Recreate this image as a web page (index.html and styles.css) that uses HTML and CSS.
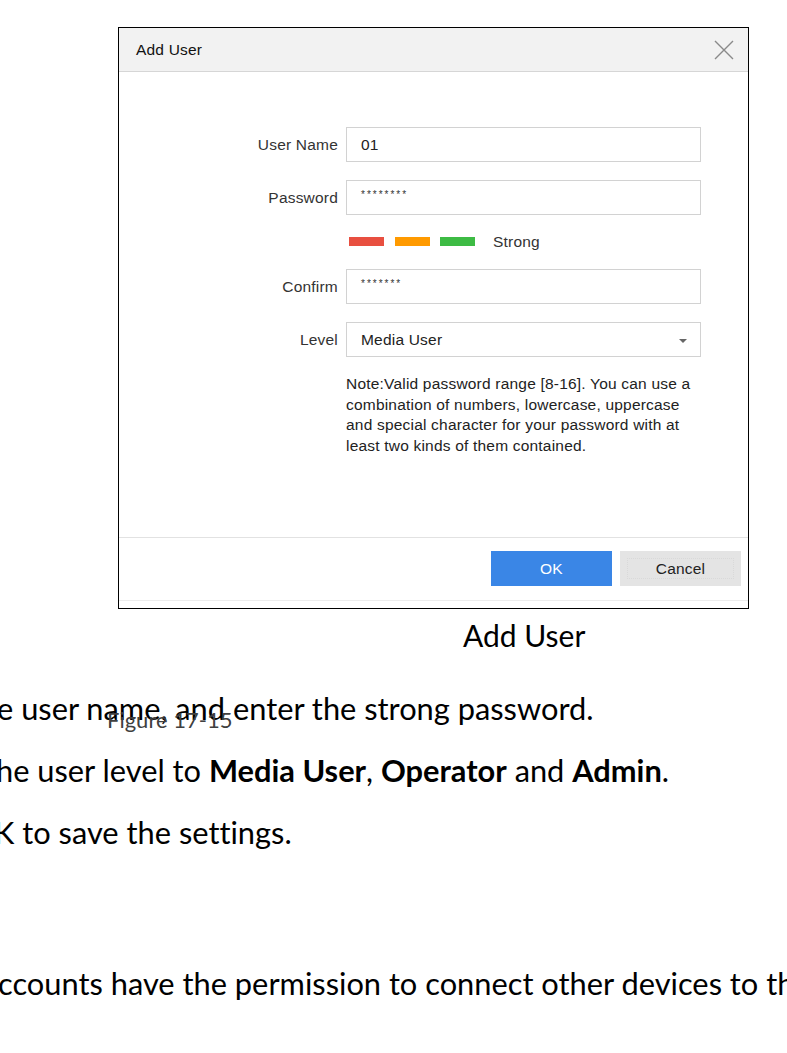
FILE: index.html
```html
<!DOCTYPE html>
<html>
<head>
<meta charset="utf-8">
<link rel="stylesheet" href="styles.css">
</head>
<body>
<div class="page">
  <div class="dialog">
    <div class="dlg-head">
      <span class="dlg-title">Add User</span>
      <svg class="dlg-close" width="20" height="20" viewBox="0 0 20 20"><path d="M1 1 L19 19 M19 1 L1 19" stroke="#8a8a8a" stroke-width="1.4" fill="none"/></svg>
    </div>
    <div class="dlg-body">
      <div class="row r-first">
        <div class="lbl">User Name</div>
        <div class="field"><span class="val">01</span></div>
      </div>
      <div class="row r-gap">
        <div class="lbl">Password</div>
        <div class="field"><span class="stars">********</span></div>
      </div>
      <div class="row r-strength">
        <div class="lbl"></div>
        <div class="strength">
          <span class="bar red"></span>
          <span class="bar orange"></span>
          <span class="bar green"></span>
          <span class="strong-txt">Strong</span>
        </div>
      </div>
      <div class="row r-confirm">
        <div class="lbl">Confirm</div>
        <div class="field"><span class="stars">*******</span></div>
      </div>
      <div class="row r-gap">
        <div class="lbl">Level</div>
        <div class="field select"><span class="val">Media User</span><span class="caret"></span></div>
      </div>
      <div class="row r-note">
        <div class="lbl"></div>
        <div class="note">Note:Valid password range [8-16]. You can use a combination of numbers, lowercase, uppercase and special character for your password with at least two kinds of them contained.</div>
      </div>
    </div>
    <div class="dlg-foot">
      <button class="btn ok">OK</button>
      <button class="btn cancel">Cancel</button>
    </div>
  </div>
  <p class="caption">Add User</p>
  <p class="doc l1">e user name, and enter the strong password.<span class="figno">Figure 17-15</span></p>
  <p class="doc l2">he user level to <b>Media User</b>, <b>Operator</b> and <b>Admin</b>.</p>
  <p class="doc l3">K to save the settings.</p>
  <p class="doc l4">ccounts have the permission to connect other devices to the</p>
</div>
</body>
</html>
```
FILE: styles.css
```css
html, body {
  margin: 0;
  padding: 0;
  background: #fff;
}
body {
  width: 787px;
  height: 1053px;
  overflow: hidden;
}
.page {
  padding-top: 27px;
}
.dialog {
  margin-left: 118px;
  width: 629px;
  height: 580px;
  border: 1px solid #000;
  background: #fff;
  font-family: "Liberation Sans", Arial, sans-serif;
  letter-spacing: 0.2px;
  color: #333;
  display: flex;
  flex-direction: column;
}
.dlg-head {
  height: 43px;
  background: #f2f2f2;
  border-bottom: 1px solid #d6d6d6;
  display: flex;
  align-items: center;
  justify-content: space-between;
  padding: 0 14px 0 17px;
}
.dlg-title {
  font-size: 15.5px;
  color: #111;
}
.dlg-close {
  display: block;
}
.dlg-body {
  flex: 1;
}
.row {
  display: flex;
  align-items: center;
}
.lbl {
  width: 219px;
  flex: none;
  text-align: right;
  font-size: 15.5px;
  color: #333;
  margin-right: 8px;
}
.field {
  width: 339px;
  height: 33px;
  border: 1px solid #d2d2d2;
  display: flex;
  align-items: center;
  padding-left: 14px;
  box-sizing: content-box;
  position: relative;
}
.field .val {
  font-size: 15.5px;
  color: #222;
}
.stars {
  font-size: 10px;
  color: #333;
  letter-spacing: 2px;
  margin-top: -7px;
}
.r-first { margin-top: 55px; }
.r-gap { margin-top: 18px; }
.r-strength { margin-top: 22px; height: 9px; }
.r-confirm { margin-top: 23px; }
.r-note { margin-top: 17px; align-items: flex-start; }
.strength {
  display: flex;
  align-items: center;
  padding-left: 3px;
}
.bar {
  display: block;
  width: 35px;
  height: 9px;
  margin-right: 10px;
}
.bar.red { background: #e84f40; margin-right: 11px; }
.bar.orange { background: #ff9a00; }
.bar.green { background: #3dbb44; margin-right: 18px; }
.strong-txt {
  font-size: 15.5px;
  color: #333;
}
.caret {
  position: absolute;
  right: 13px;
  top: 16px;
  width: 0;
  height: 0;
  border-left: 4px solid transparent;
  border-right: 4px solid transparent;
  border-top: 4px solid #666;
}
.note {
  width: 356px;
  font-size: 15.5px;
  line-height: 20.5px;
  color: #222;
}
.dlg-foot {
  border-top: 1px solid #e2e2e2;
  border-bottom: 1px solid #ececec;
  margin-bottom: 7px;
  display: flex;
  justify-content: flex-end;
  align-items: flex-start;
  padding: 13px 7px 0 0;
  box-sizing: border-box;
  height: 64px;
}
.btn {
  width: 121px;
  height: 35px;
  border: none;
  font-family: "Liberation Sans", Arial, sans-serif;
  font-size: 15.5px;
  letter-spacing: 0.2px;
  padding: 0;
}
.btn.ok {
  background: #3a86e6;
  color: #fff;
  margin-right: 8px;
}
.btn.cancel {
  background: #e4e4e4;
  color: #222;
  outline: 1px dotted #d9d9d9;
  outline-offset: -8px;
}
.caption {
  margin: 6px 0 0 463px;
  font-family: Lato, "Noto Sans", sans-serif;
  font-size: 30px;
  line-height: 40px;
  color: #000;
}
.doc {
  font-family: Lato, "Noto Sans", sans-serif;
  font-size: 30.8px;
  line-height: 40px;
  color: #000;
  white-space: nowrap;
  margin: 0;
  position: relative;
  font-variant-ligatures: none;
}
.doc b { font-weight: 700; }
.l1 { margin-top: 34px; margin-left: -3px; }
.l2 { margin-top: 22px; margin-left: -4px; }
.l3 { margin-top: 22px; margin-left: -6px; }
.l4 { margin-top: 111px; margin-left: -2px; }
.figno {
  position: absolute;
  left: 110px;
  top: 11px;
  font-size: 22px;
  color: #404040;
  font-weight: 400;
}
```
